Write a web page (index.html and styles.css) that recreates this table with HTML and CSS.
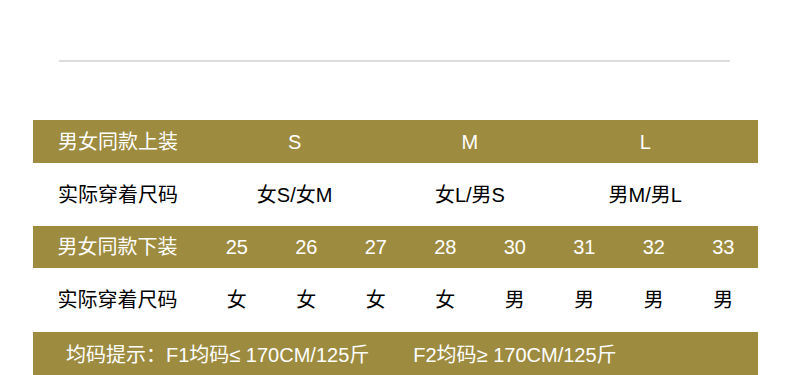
FILE: index.html
```html
<!DOCTYPE html>
<html lang="zh">
<head>
<meta charset="utf-8">
<title>尺码表</title>
<link rel="stylesheet" href="styles.css">
</head>
<body>
<div class="page">
  <div class="rule"></div>
  <div class="size-table">
    <div class="row top bar h43">
      <div class="cell label">男女同款上装</div>
      <div class="cell">S</div>
      <div class="cell">M</div>
      <div class="cell">L</div>
    </div>
    <div class="row top h63">
      <div class="cell label">实际穿着尺码</div>
      <div class="cell">女S/女M</div>
      <div class="cell">女L/男S</div>
      <div class="cell">男M/男L</div>
    </div>
    <div class="row bottom bar h42">
      <div class="cell label">男女同款下装</div>
      <div class="cell">25</div>
      <div class="cell">26</div>
      <div class="cell">27</div>
      <div class="cell">28</div>
      <div class="cell">30</div>
      <div class="cell">31</div>
      <div class="cell">32</div>
      <div class="cell">33</div>
    </div>
    <div class="row bottom h64">
      <div class="cell label">实际穿着尺码</div>
      <div class="cell">女</div>
      <div class="cell">女</div>
      <div class="cell">女</div>
      <div class="cell">女</div>
      <div class="cell">男</div>
      <div class="cell">男</div>
      <div class="cell">男</div>
      <div class="cell">男</div>
    </div>
    <div class="footer bar">
      <span class="tip">均码提示：F1均码≤ 170CM/125斤</span>
      <span class="tip second">F2均码≥ 170CM/125斤</span>
    </div>
  </div>
</div>
</body>
</html>
```
FILE: styles.css
```css
html, body {
  margin: 0;
  padding: 0;
  background: #ffffff;
}
body {
  font-family: "Liberation Sans", "Noto Sans CJK SC", sans-serif;
  font-size: 20px;
  color: #000000;
  overflow: hidden;
}
.page {
  width: 790px;
  padding-top: 60px;
}
.rule {
  margin-left: 59px;
  width: 671px;
  height: 2px;
  background: #dcdcdc;
}
.size-table {
  margin-top: 58px;
  margin-left: 33px;
  width: 725px;
}
.row {
  display: grid;
  align-items: center;
}
.row.top {
  grid-template-columns: 174px 175.3px 175.3px 175.3px 1fr;
}
.row.top .label {
  padding-right: 4px;
}
.row.bottom {
  grid-template-columns: 169px repeat(8, 69.5px);
}
.bar {
  background: #9d8b3f;
  color: #ffffff;
}
.h43 { height: 43px; }
.h63 { height: 63px; }
.h42 { height: 42px; }
.h64 { height: 64px; }
.cell {
  text-align: center;
  white-space: nowrap;
  line-height: 24px;
}
.footer {
  height: 46px;
  display: flex;
  align-items: center;
  padding-left: 33px;
  line-height: 24px;
}
.tip {
  white-space: nowrap;
}
.tip.second {
  margin-left: 44px;
}
```
